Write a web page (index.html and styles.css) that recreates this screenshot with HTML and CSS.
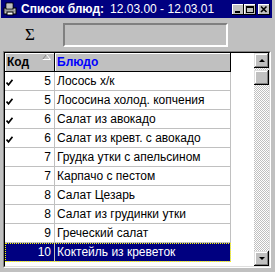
FILE: index.html
```html
<!DOCTYPE html>
<html>
<head>
    <title>Список блюд</title>
    <link rel="stylesheet" href="styles.css">
</head>
<body>
    <div class="window">
        <div class="titlebar">
            <svg class="app-icon" width="14" height="14" viewBox="0 0 14 14">
                <rect x="1" y="6" width="12" height="6" fill="#c0c0c0" stroke="#000"/>
                <rect x="3" y="1" width="7" height="6" fill="#fff" stroke="#000"/>
                <line x1="4" y1="3" x2="9" y2="3" stroke="#808080"/>
                <line x1="4" y1="5" x2="9" y2="5" stroke="#808080"/>
                <line x1="2" y1="9" x2="12" y2="9" stroke="#808080"/>
                <rect x="4" y="10" width="6" height="3" fill="#fff" stroke="#000"/>
            </svg>
            <span class="caption">Список блюд:</span>
            <span class="period">12.03.00 - 12.03.01</span>
            <div class="title-buttons">
                <span class="tbtn">
                    <svg width="12" height="11" viewBox="0 0 12 11"><rect x="3" y="7" width="5" height="2" fill="#000"/></svg>
                </span>
                <span class="tbtn">
                    <svg width="12" height="11" viewBox="0 0 12 11"><rect x="2.5" y="2.5" width="7" height="6" fill="none" stroke="#000"/><rect x="2" y="2" width="8" height="2" fill="#000"/></svg>
                </span>
                <span class="tbtn close">
                    <svg width="12" height="11" viewBox="0 0 12 11"><path d="M3 2.5 L8.5 8 M8.5 2.5 L3 8" stroke="#000" stroke-width="1.6"/></svg>
                </span>
            </div>
        </div>

        <div class="toolbar">
            <span class="sigma">Σ</span>
            <div class="total-field"></div>
        </div>

        <div class="grid">
            <div class="grid-inner">
                <div class="table">
                    <div class="row head">
                        <div class="cell code">
                            <span class="head-text">Код</span>
                            <svg class="sort" width="9" height="6" viewBox="0 0 9 6">
                                <path d="M0.5 5.5 L4.5 0.5" stroke="#808080"/>
                                <path d="M4.5 0.5 L8.5 5.5 L0.5 5.5" stroke="#fff" fill="none"/>
                            </svg>
                        </div>
                        <div class="cell name head-blue">Блюдо</div>
                    </div>
                    <div class="row">
                        <div class="cell code"><svg class="check" width="7" height="7" viewBox="0 0 7 7"><path d="M0.5 3.5 L2.5 5.8 L6.5 0.8" stroke="#000" stroke-width="1.7" fill="none"/></svg><span class="num">5</span></div>
                        <div class="cell name">Лосось х/к</div>
                    </div>
                    <div class="row">
                        <div class="cell code"><svg class="check" width="7" height="7" viewBox="0 0 7 7"><path d="M0.5 3.5 L2.5 5.8 L6.5 0.8" stroke="#000" stroke-width="1.7" fill="none"/></svg><span class="num">5</span></div>
                        <div class="cell name">Лососина холод. копчения</div>
                    </div>
                    <div class="row">
                        <div class="cell code"><svg class="check" width="7" height="7" viewBox="0 0 7 7"><path d="M0.5 3.5 L2.5 5.8 L6.5 0.8" stroke="#000" stroke-width="1.7" fill="none"/></svg><span class="num">6</span></div>
                        <div class="cell name">Салат из авокадо</div>
                    </div>
                    <div class="row">
                        <div class="cell code"><svg class="check" width="7" height="7" viewBox="0 0 7 7"><path d="M0.5 3.5 L2.5 5.8 L6.5 0.8" stroke="#000" stroke-width="1.7" fill="none"/></svg><span class="num">6</span></div>
                        <div class="cell name">Салат из кревт. с авокадо</div>
                    </div>
                    <div class="row">
                        <div class="cell code"><span class="num">7</span></div>
                        <div class="cell name">Грудка утки с апельсином</div>
                    </div>
                    <div class="row">
                        <div class="cell code"><span class="num">7</span></div>
                        <div class="cell name">Карпачо с пестом</div>
                    </div>
                    <div class="row">
                        <div class="cell code"><span class="num">8</span></div>
                        <div class="cell name">Салат Цезарь</div>
                    </div>
                    <div class="row">
                        <div class="cell code"><span class="num">8</span></div>
                        <div class="cell name">Салат из грудинки утки</div>
                    </div>
                    <div class="row">
                        <div class="cell code"><span class="num">9</span></div>
                        <div class="cell name">Греческий салат</div>
                    </div>
                    <div class="row selected">
                        <div class="cell code"><span class="num">10</span></div>
                        <div class="cell name">Коктейль из креветок</div>
                    </div>
                </div>
                <div class="blank"></div>
                <div class="scrollbar">
                    <div class="sbtn"><span class="arrow up"></span></div>
                    <div class="track"><div class="thumb"></div></div>
                    <div class="sbtn"><span class="arrow down"></span></div>
                </div>
            </div>
        </div>
    </div>
</body>
</html>
```

FILE: styles.css
```css
body {
    margin: 0;
    background-color: #c0c0c0;
    font-family: "Liberation Sans", Arial, sans-serif;
}

.window {
    width: 275px;
    height: 272px;
    background-color: #c0c0c0;
}

/* title bar */
.titlebar {
    height: 18px;
    margin: 0 3px 0 1px;
    display: flex;
    align-items: center;
    background-color: #000080;
    color: #ffffff;
    white-space: nowrap;
}

.app-icon {
    margin-left: 2px;
}

.caption {
    margin-left: 4px;
    font-size: 12px;
    font-weight: bold;
}

.period {
    margin-left: 6px;
    font-size: 12px;
}

.title-buttons {
    margin-left: auto;
    margin-right: 2px;
    display: flex;
}

.tbtn {
    width: 12px;
    height: 11px;
    background-color: #c0c0c0;
    box-shadow: inset -1px -1px #000000, inset 1px 1px #ffffff;
}

.tbtn svg {
    display: block;
}

.tbtn.close {
    margin-left: 2px;
}

/* sum row */
.toolbar {
    height: 33px;
    display: flex;
    align-items: center;
}

.sigma {
    width: 38px;
    margin-left: 25px;
    font-family: "Liberation Serif", serif;
    font-size: 17px;
}

.total-field {
    width: 161px;
    height: 20px;
    border: 2px solid;
    border-color: #808080 #ffffff #ffffff #808080;
}

/* grid */
.grid {
    width: 266px;
    height: 215px;
    margin-left: 3px;
    border: 1px solid;
    border-color: #808080 #ffffff #ffffff #808080;
}

.grid-inner {
    height: 213px;
    display: flex;
    border: 1px solid;
    border-color: #000000 #dfdfdf #dfdfdf #000000;
    background-color: #ffffff;
}

.table {
    width: 226px;
    font-size: 12px;
}

.row {
    display: flex;
    height: 18px;
    border-bottom: 1px solid #c0c0c0;
    line-height: 18px;
}

.cell {
    border-right: 1px solid #c0c0c0;
    white-space: nowrap;
    overflow: hidden;
}

.cell.code {
    width: 49px;
    display: flex;
    align-items: center;
}

.cell.name {
    width: 173px;
    padding-left: 2px;
}

.check {
    margin-left: 1px;
    margin-top: 2px;
}

.num {
    margin-left: auto;
    padding-right: 3px;
}

.row.head {
    background-color: #c0c0c0;
    border-bottom-color: #000000;
    font-weight: bold;
}

.row.head .cell {
    border-right-color: #000000;
    box-shadow: inset 1px 1px #ffffff;
    position: relative;
}

.head-text {
    padding-left: 2px;
}

.sort {
    position: absolute;
    top: 1px;
    right: 3px;
}

.head-blue {
    color: #0000ff;
}

.row.selected {
    background-color: #000080;
    color: #ffffff;
    outline: 1px dotted #ffff00;
    outline-offset: -1px;
}

.blank {
    width: 23px;
}

/* scroll bar */
.scrollbar {
    width: 15px;
    display: flex;
    flex-direction: column;
}

.sbtn {
    height: 15px;
    display: flex;
    align-items: center;
    justify-content: center;
    background-color: #c0c0c0;
    box-shadow: inset -1px -1px #000000, inset 1px 1px #dfdfdf, inset -2px -2px #808080, inset 2px 2px #ffffff;
}

.arrow {
    width: 0;
    height: 0;
    border-left: 3px solid transparent;
    border-right: 3px solid transparent;
}

.arrow.up {
    border-bottom: 3px solid #000000;
}

.arrow.down {
    border-top: 3px solid #000000;
}

.track {
    flex: 1;
    background-image: conic-gradient(#ffffff 25%, #c0c0c0 0 50%, #ffffff 0 75%, #c0c0c0 0);
    background-size: 2px 2px;
}

.thumb {
    height: 15px;
    margin-top: 2px;
    background-color: #c0c0c0;
    box-shadow: inset -1px -1px #000000, inset 1px 1px #dfdfdf, inset -2px -2px #808080, inset 2px 2px #ffffff;
}
```
